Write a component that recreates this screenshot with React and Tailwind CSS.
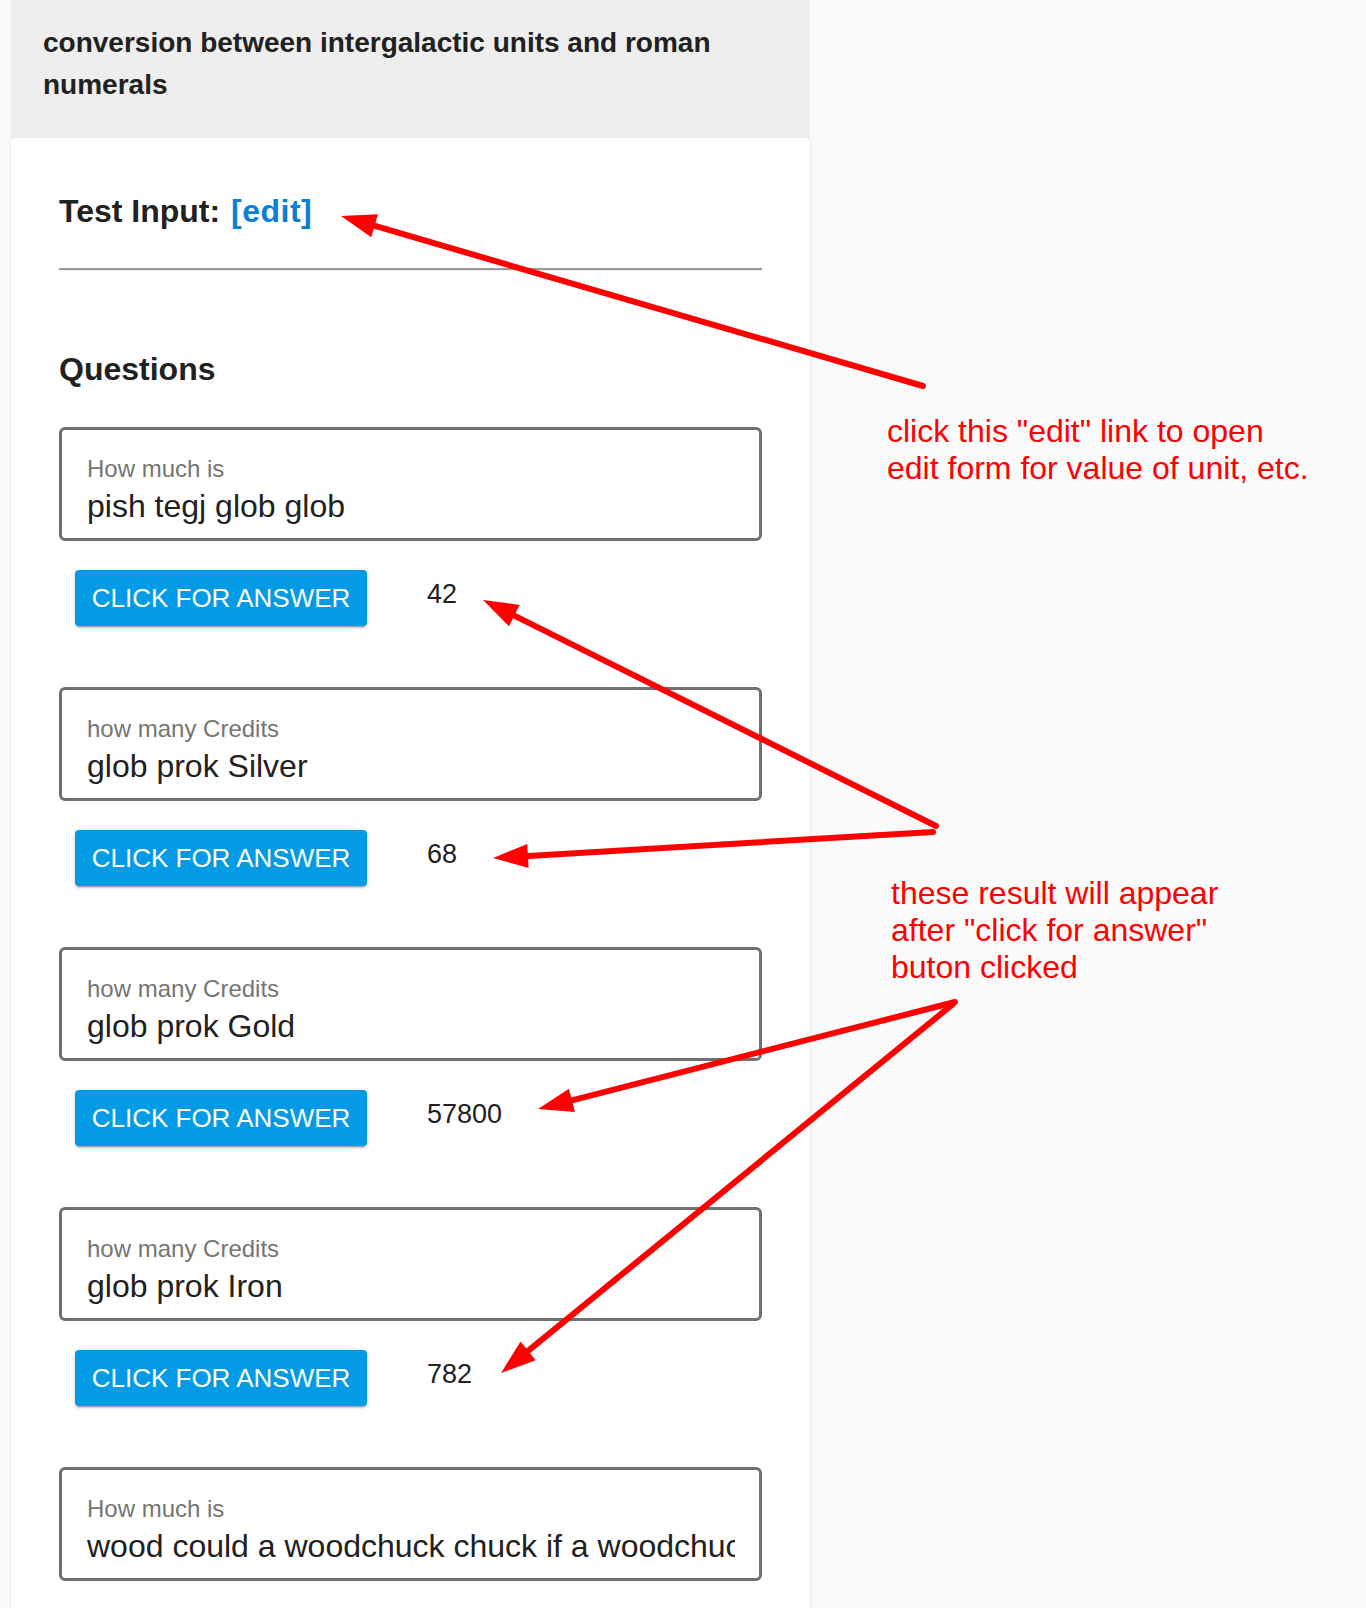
import React from 'react'

const questions = [
  { label: 'How much is', value: 'pish tegj glob glob', answer: '42' },
  { label: 'how many Credits', value: 'glob prok Silver', answer: '68' },
  { label: 'how many Credits', value: 'glob prok Gold', answer: '57800' },
  { label: 'how many Credits', value: 'glob prok Iron', answer: '782' },
  { label: 'How much is', value: 'wood could a woodchuck chuck if a woodchuck could chuck wood ?', answer: null },
]

// annotation arrows drawn over the page: tail -> tip
const arrows = [
  { from: [923, 386], to: [341, 216] },
  { from: [936, 826], to: [483, 600] },
  { from: [933, 832], to: [493, 858] },
  { from: [955, 1002], to: [538, 1109] },
  { from: [953, 1004], to: [501, 1373] },
]

function Arrow({ from, to }) {
  const [x1, y1] = from
  const [x2, y2] = to
  const dx = x2 - x1
  const dy = y2 - y1
  const len = Math.hypot(dx, dy)
  const ux = dx / len
  const uy = dy / len
  const L = 35
  const W = 12
  const bx = x2 - ux * L
  const by = y2 - uy * L
  const pts = [
    [x2, y2],
    [bx - uy * W, by + ux * W],
    [bx + uy * W, by - ux * W],
  ]
    .map((p) => p.join(','))
    .join(' ')
  return (
    <g>
      <line x1={x1} y1={y1} x2={bx + ux * 4} y2={by + uy * 4} stroke="#ff0000" strokeWidth="6" strokeLinecap="round" />
      <polygon points={pts} fill="#ff0000" />
    </g>
  )
}

function Question({ label, value, answer }) {
  return (
    <div>
      <div className="h-[114px] border-[3px] border-[#707070] rounded-[6px] bg-white pl-[25px] pr-[24px] pt-[25px] overflow-hidden">
        <div className="text-[24px] leading-[28px] text-[#757575]">{label}</div>
        <div className="mt-1 text-[32px] leading-[38px] text-[#212121] whitespace-nowrap overflow-hidden">{value}</div>
      </div>
      {answer && (
        <div className="mt-[29px] h-[56px] pl-4 flex items-center">
          <button className="h-[56px] w-[292px] rounded-[4px] bg-[#039be5] text-white text-[26px] leading-none shadow-[0_3px_1px_-2px_rgba(0,0,0,0.2),0_2px_2px_0_rgba(0,0,0,0.14),0_1px_5px_0_rgba(0,0,0,0.12)]">
            CLICK FOR ANSWER
          </button>
          <span className="ml-[60px] pb-[7px] text-[27px] text-[#212121]">{answer}</span>
        </div>
      )}
    </div>
  )
}

export default function App() {
  return (
    <div className="relative min-h-screen bg-[#fafafa] font-['Liberation_Sans',Arial,sans-serif]">
      <div className="ml-[11px] w-[799px] min-h-[1608px] flex flex-col bg-[#eeeeee]">
        {/* Header */}
        <header className="h-[138px] pl-8 pr-8 pt-[22px]">
          <h1 className="text-[28px] leading-[42px] font-bold text-[#212121]">
            conversion between intergalactic units and roman numerals
          </h1>
        </header>

        {/* Card */}
        <main className="flex-1 bg-white rounded-t-[4px] shadow-[0_1px_3px_rgba(0,0,0,0.14)] px-12 pt-[49px] pb-8">
          <h2 className="text-[32px] leading-[48px] font-bold text-[#212121]">
            Test Input: <a href="#" className="ml-[2px] tracking-[0.5px] text-[#0a7fd9]">[edit]</a>
          </h2>
          <div className="mt-[33px] h-[2px] bg-[#9a9a9a]" />
          <div className="h-px bg-[#ececec]" />

          <h2 className="mt-[74px] text-[32px] leading-[48px] font-bold text-[#212121]">Questions</h2>

          <div className="mt-[34px] flex flex-col gap-[61px]">
            {questions.map((q, i) => (
              <Question key={i} {...q} />
            ))}
          </div>
        </main>
      </div>

      {/* Annotations */}
      <div className="absolute left-[887px] top-[413px] text-[32px] leading-[37px] text-[#ff0000]">
        <p>click this "edit" link to open</p>
        <p>edit form for value of unit, etc.</p>
      </div>
      <div className="absolute left-[891px] top-[875px] text-[32px] leading-[37px] text-[#ff0000]">
        <p>these result will appear</p>
        <p>after "click for answer"</p>
        <p>buton clicked</p>
      </div>

      <svg className="absolute left-0 top-0 pointer-events-none" width="1366" height="1608">
        {arrows.map((a, i) => (
          <Arrow key={i} {...a} />
        ))}
      </svg>
    </div>
  )
}
